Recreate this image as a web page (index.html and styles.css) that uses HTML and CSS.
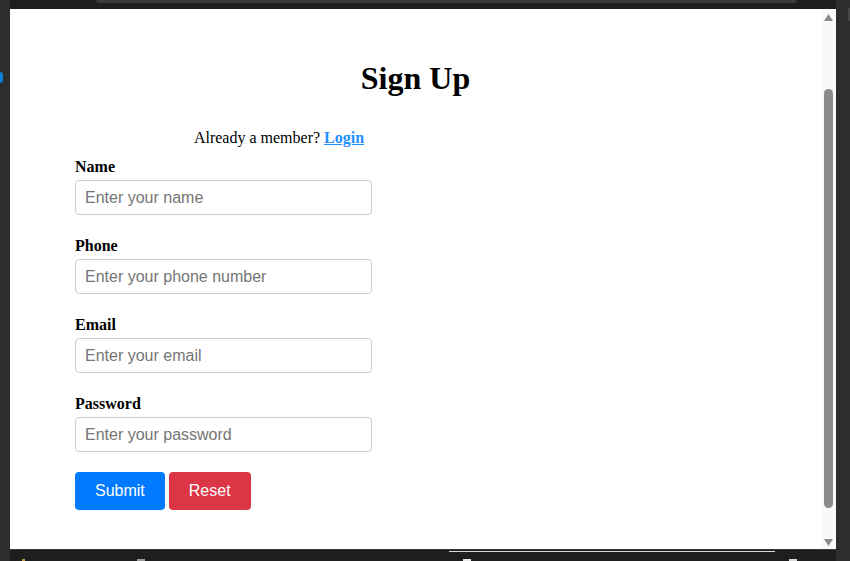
FILE: index.html
```html
<!DOCTYPE html>
<html lang="en">
<head>
<meta charset="utf-8">
<title>Sign Up</title>
<link rel="stylesheet" href="styles.css">
</head>
<body>
<div class="frame">
  <div class="side-left"><div class="side-dot"></div></div>
  <div class="middle">
    <div class="topbar"><div class="topbar-tab"></div></div>
    <div class="viewport">
      <main class="page">
        <h1 class="title">Sign Up</h1>
        <form class="form">
          <p class="member">Already a member? <a class="login" href="#">Login</a></p>
          <label class="field-label" for="name">Name</label>
          <input class="field-input" id="name" type="text" placeholder="Enter your name">
          <label class="field-label" for="phone">Phone</label>
          <input class="field-input" id="phone" type="tel" placeholder="Enter your phone number">
          <label class="field-label" for="email">Email</label>
          <input class="field-input" id="email" type="email" placeholder="Enter your email">
          <label class="field-label" for="password">Password</label>
          <input class="field-input" id="password" type="password" placeholder="Enter your password">
          <div class="actions">
            <button class="btn btn-submit" type="button">Submit</button>
            <button class="btn btn-reset" type="button">Reset</button>
          </div>
        </form>
      </main>
      <div class="scrollbar">
        <svg class="arrow arrow-up" width="9" height="7" viewBox="0 0 9 7"><polygon points="4.5,0 9,7 0,7" fill="#8b8b8b"/></svg>
        <div class="thumb"></div>
        <svg class="arrow arrow-down" width="9" height="7" viewBox="0 0 9 7"><polygon points="0,0 9,0 4.5,7" fill="#8b8b8b"/></svg>
      </div>
    </div>
    <div class="bottombar">
      <div class="bottom-line"></div>
      <div class="bottom-marks">
        <span class="mark mark-a"></span>
        <span class="mark mark-b"></span>
        <span class="mark mark-c"></span>
        <span class="mark mark-d"></span>
      </div>
    </div>
  </div>
  <div class="side-right"><div class="side-mark"></div></div>
</div>
</body>
</html>
```

FILE: styles.css
```css
html, body {
  margin: 0;
  padding: 0;
  width: 850px;
  height: 561px;
  overflow: hidden;
  background: #2d2d2d;
}

.frame {
  display: flex;
  width: 850px;
  height: 561px;
}

.side-left {
  width: 10px;
  flex: none;
  background: #2d2d2d;
  display: flex;
  flex-direction: column;
}

.side-dot {
  margin-top: 72px;
  width: 3px;
  height: 11px;
  background: #0a7fd8;
  border-radius: 0 6px 6px 0;
}

.side-right {
  width: 14px;
  flex: none;
  background: #2d2d2d;
  display: flex;
  flex-direction: column;
}

.side-mark {
  margin: 8px 0 0 12px;
  width: 2px;
  height: 13px;
  background: #474747;
}

.middle {
  width: 826px;
  flex: none;
  display: flex;
  flex-direction: column;
}

.topbar {
  height: 9px;
  background: #1e1e1e;
  display: flex;
}

.topbar-tab {
  margin-left: 86px;
  width: 701px;
  height: 3px;
  background: #3b3b3b;
  border-radius: 0 0 3px 3px;
}

.viewport {
  height: 540px;
  display: flex;
}

.page {
  width: 811px;
  flex: none;
  background: #ffffff;
  padding-top: 51px;
  box-sizing: border-box;
  overflow: hidden;
  font-family: "Liberation Serif", "Times New Roman", serif;
  color: #000;
}

.title {
  margin: 0;
  font-size: 32px;
  line-height: 37px;
  font-weight: bold;
  text-align: center;
}

.form {
  margin: 31px 0 0 65px;
  width: 408px;
}

.member {
  margin: 0 0 9px;
  font-size: 16px;
  line-height: 19px;
  text-align: center;
}

.login {
  color: #1e90ff;
  font-weight: bold;
  text-decoration: underline;
}

.field-label {
  display: block;
  font-size: 16px;
  line-height: 19px;
  font-weight: bold;
  padding-top: 1px;
  margin-bottom: 4px;
}

.field-input {
  display: block;
  width: 297px;
  height: 35px;
  box-sizing: border-box;
  margin: 0 0 20px;
  padding: 0 9px;
  border: 1px solid #cccccc;
  border-radius: 4px;
  background: #fff;
  font-family: "Liberation Sans", Arial, sans-serif;
  font-size: 16px;
  color: #000;
  outline: none;
}

.field-input::placeholder {
  color: #757575;
}

.actions {
  display: flex;
  gap: 4px;
  margin-top: 2px;
}

.btn {
  height: 38px;
  padding: 0 20px;
  border: none;
  border-radius: 4px;
  color: #ffffff;
  font-family: "Liberation Sans", Arial, sans-serif;
  font-size: 16px;
  cursor: pointer;
}

.btn-submit {
  background: #007bff;
}

.btn-reset {
  background: #dc3545;
}

.scrollbar {
  width: 15px;
  flex: none;
  background: #f9f9f9;
  display: flex;
  flex-direction: column;
  align-items: center;
}

.arrow {
  display: block;
  flex: none;
}

.arrow-up {
  margin-top: 5px;
}

.thumb {
  margin-top: 68px;
  width: 9px;
  height: 419px;
  border-radius: 5px;
  background: #8b8b8b;
  flex: none;
}

.arrow-down {
  margin-top: 31px;
}

.bottombar {
  height: 12px;
  background: #1e1e1e;
  border-top: 1px solid #3a3a3a;
  box-sizing: border-box;
  display: flex;
  flex-direction: column;
}

.bottom-line {
  margin: 1px 0 0 439px;
  width: 326px;
  height: 1px;
  background: #d8d8d8;
}

.bottom-marks {
  margin-top: 7px;
  display: flex;
  height: 2px;
}

.mark {
  display: block;
  height: 2px;
  width: 8px;
  background: #cfcfcf;
}

.mark-a {
  margin-left: 12px;
  width: 3px;
  background: #c79a4a;
}

.mark-b {
  margin-left: 112px;
  background: #9a9a9a;
}

.mark-c {
  margin-left: 318px;
  background: #e8e8e8;
}

.mark-d {
  margin-left: 318px;
  background: #d9d9d9;
}
```
